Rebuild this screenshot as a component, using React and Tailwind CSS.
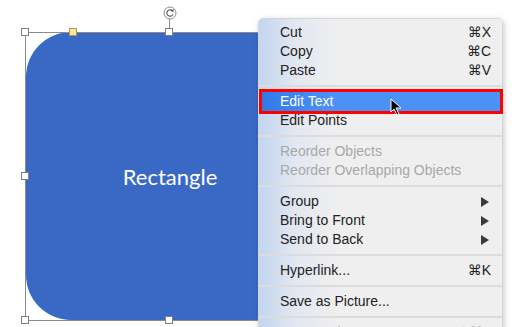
import React from "react";

const items = [
  { label: "Cut", key: "⌘X" },
  { label: "Copy", key: "⌘C" },
  { label: "Paste", key: "⌘V" },
  "sep",
  { label: "Edit Text", active: true },
  { label: "Edit Points" },
  "sep",
  { label: "Reorder Objects", disabled: true },
  { label: "Reorder Overlapping Objects", disabled: true },
  "sep",
  { label: "Group", sub: true },
  { label: "Bring to Front", sub: true },
  { label: "Send to Back", sub: true },
  "sep",
  { label: "Hyperlink...", key: "⌘K" },
  "sep",
  { label: "Save as Picture..." },
  "sep",
  { label: "Format Shape...", key: "⇧⌘1", disabled: true },
];

function Handle({ className, yellow }) {
  return (
    <div
      className={`absolute w-[8px] h-[8px] border ${
        yellow ? "bg-[#fbe7a1] border-[#b8973a]" : "bg-white border-[#7f7f7f]"
      } ${className}`}
    />
  );
}

function Arrow() {
  return (
    <svg width="8" height="10" viewBox="0 0 8 10">
      <polygon points="0,0 8,5 0,10" fill="#3a3a3a" />
    </svg>
  );
}

function MenuRow({ item }) {
  const color = item.active
    ? "text-white"
    : item.disabled
    ? "text-[#a8a8a8]"
    : "text-[#222]";
  return (
    <div className="relative">
      <div
        className={`flex items-center justify-between h-[19px] pl-[21px] pr-[10px] ${color} ${
          item.active
            ? "bg-linear-to-r from-[#2f79e9] to-[#4b91f6] to-30%"
            : ""
        }`}
      >
        <span>{item.label}</span>
        {item.key && <span className="pr-[1px]">{item.key}</span>}
        {item.sub && (
          <span className="pr-[3px] flex items-center">
            <Arrow />
          </span>
        )}
      </div>
      {item.active && (
        <>
          <div className="absolute left-0 right-[-1px] top-[-3px] bottom-[-3px] border-[3px] border-[#ff0000]" />
          <svg
            className="absolute left-[131px] top-[6px]"
            width="14"
            height="18"
            viewBox="0 0 14 18"
          >
            <polygon
              points="1,1 1,14 4,11 7,17 9,16 6,10 11,10"
              fill="#000"
              stroke="#fff"
              strokeWidth="1"
            />
          </svg>
        </>
      )}
    </div>
  );
}

export default function App() {
  return (
    <div className="relative w-[519px] h-[327px] bg-white overflow-hidden font-['Liberation_Sans','DejaVu_Sans',sans-serif]">
      {/* shape */}
      <div className="absolute left-[26px] top-[32px] w-[288px] h-[288px] rounded-[45px] bg-[#3a69c5] flex items-center justify-center">
        <span className="text-white text-[22px] font-['Lato','Open_Sans',sans-serif]">
          Rectangle
        </span>
      </div>

      {/* selection */}
      <div className="absolute left-[25px] top-[32px] w-[292px] h-[289px] border border-[#8c8c8c]" />
      <div className="absolute left-[169px] top-[18px] w-[1px] h-[14px] bg-[#8c8c8c]" />
      <svg
        className="absolute left-[163px] top-[6px]"
        width="14"
        height="14"
        viewBox="0 0 14 14"
      >
        <circle cx="7" cy="7" r="6" fill="#fff" stroke="#8c8c8c" />
        <path
          d="M9.8 5.4 A3.2 3.2 0 1 0 9.9 8.4"
          fill="none"
          stroke="#555"
          strokeWidth="1.1"
        />
        <polygon points="8.4,3.8 10.9,3.6 10.3,6.3" fill="#555" />
      </svg>
      <Handle className="left-[21px] top-[28px]" />
      <Handle className="left-[165px] top-[28px]" />
      <Handle yellow className="left-[69px] top-[28px]" />
      <Handle className="left-[21px] top-[172px]" />
      <Handle className="left-[21px] top-[316px]" />
      <Handle className="left-[165px] top-[316px]" />

      {/* context menu */}
      <div className="absolute left-[258px] top-[18px] w-[245px] h-[330px] rounded-t-[5px] border border-[#d6d6d6] shadow-[1px_2px_6px_rgba(0,0,0,0.22)] bg-linear-to-r from-[#c3d5f0] via-[#e2e8f1] via-15% to-[#efefef] to-32% pt-[4px] text-[14px]">
        {items.map((item, i) =>
          item === "sep" ? (
            <div key={i} className="h-[12px] flex items-center">
              <div className="w-full h-[2px] bg-[#dcdcdc]" />
            </div>
          ) : (
            <MenuRow key={i} item={item} />
          )
        )}
      </div>
    </div>
  );
}
